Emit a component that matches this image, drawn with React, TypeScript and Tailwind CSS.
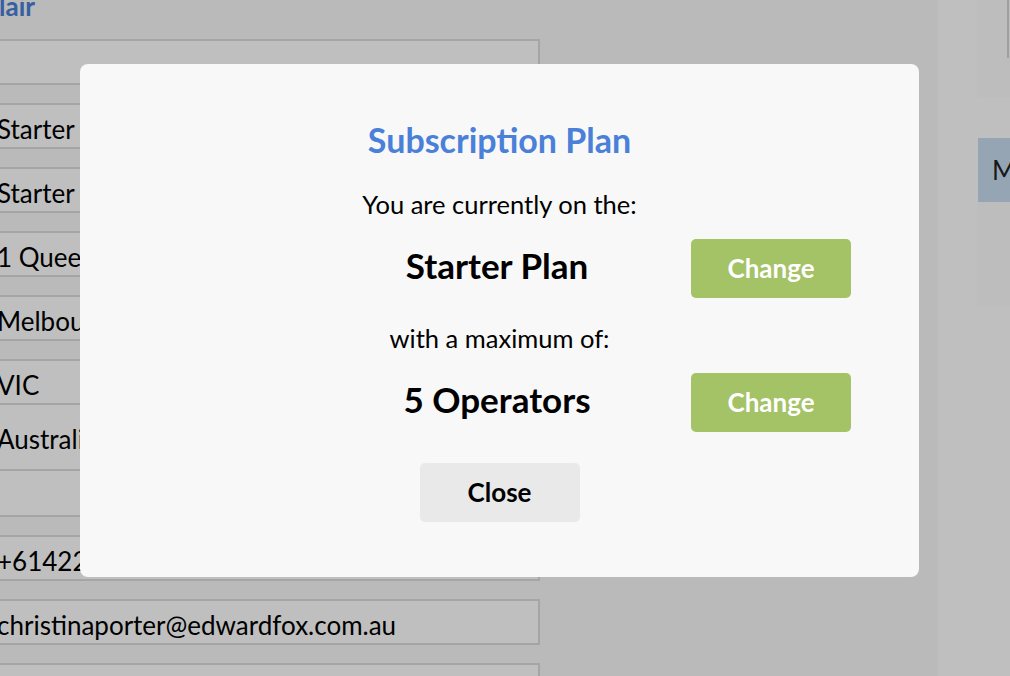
import React from 'react';

const fields = ['', 'Starter Plan', 'Starter Plan', '1 Queen Street', 'Melbourne', 'VIC'];

const PlanRow: React.FC<{ label: string }> = ({ label }) => (
  <div className="flex items-center justify-center">
    <div className="w-[239px]" />
    <div className="w-[220px] mb-[6px] text-center text-[35px] font-bold text-black leading-none whitespace-nowrap">{label}</div>
    <div className="w-[244px] pl-[84px]">
      <button className="w-[160px] h-[59px] rounded-[5px] bg-[#a4c266] text-white text-[26px] font-bold">
        Change
      </button>
    </div>
  </div>
);

const App: React.FC = () => {
  return (
    <div className="relative w-[1010px] h-[676px] overflow-hidden bg-[#f8f8f8]" style={{ fontFamily: 'Lato, "Open Sans", sans-serif' }}>
      {/* Page behind the dialog */}
      <div className="flex h-full">
        <div className="w-[552px] -ml-[12px] flex flex-col">
          <div className="h-[40px] -mt-[13px] -ml-[200px] w-[247px] text-right text-[26px] font-bold text-[#4a80d8] whitespace-nowrap">
            Christina Sinclair
          </div>
          <div className="flex flex-col gap-[18px] mt-[13px]">
            {fields.map((value, i) => (
              <div
                key={i}
                className={`h-[46px] bg-white border-2 border-[#dcdcdc] pl-[7px] pt-[6px] flex items-center text-[26px] text-black whitespace-nowrap ${i === 5 ? '-mb-[18px]' : ''}`}
              >
                {value}
              </div>
            ))}
            <div className="h-[66px] bg-white border-2 border-t-0 border-[#dcdcdc] pl-[7px] pt-[4px] flex items-center text-[26px] text-black">
              Australia
            </div>
            <div className="h-[46px] -mt-[18px] bg-white border-2 border-t-0 border-[#dcdcdc]" />
            <div className="h-[46px] bg-white border-2 border-[#dcdcdc] pl-[7px] pt-[6px] flex items-center text-[26px] text-black whitespace-nowrap">
              +61422 555 010
            </div>
            <div className="h-[46px] bg-white border-2 border-[#dcdcdc] pl-[7px] pt-[6px] flex items-center text-[26px] text-black whitespace-nowrap">
              christinaporter@edwardfox.com.au
            </div>
            <div className="h-[46px] bg-white border-2 border-[#dcdcdc]" />
          </div>
        </div>
        <div className="flex-1" />
        <div className="w-[72px] bg-white flex flex-col">
          <div className="ml-[40px] h-[97px] bg-[#fcfcfc] relative">
            <div className="absolute right-[1px] top-0 w-[2px] h-[58px] bg-[#d6d6d6]" />
          </div>
          <div className="ml-[40px] mt-[41px] h-[64px] bg-[#c9ddf0] flex items-center pl-[14px] text-[26px] text-[#222] overflow-hidden">
            My
          </div>
          <div className="ml-[40px] h-[104px] bg-[#fcfcfc]" />
        </div>
      </div>

      {/* Overlay */}
      <div className="absolute inset-0 bg-black/25" />

      {/* Dialog */}
      <div className="absolute left-[80px] top-[64px] w-[839px] h-[513px] rounded-[8px] bg-[#f8f8f8] flex flex-col items-center pt-[56px]">
        <h2 className="text-[34px] font-bold text-[#4a80d8] leading-[40px]">Subscription Plan</h2>
        <p className="mt-[30px] text-[25.5px] text-black leading-[28px]">You are currently on the:</p>
        <div className="mt-[21px]">
          <PlanRow label="Starter Plan" />
        </div>
        <p className="mt-[26px] text-[25.5px] text-black leading-[28px]">with a maximum of:</p>
        <div className="mt-[21px]">
          <PlanRow label="5 Operators" />
        </div>
        <button className="mt-[31px] w-[160px] h-[59px] rounded-[5px] bg-[#e9e9e9] text-[26px] font-bold text-black">
          Close
        </button>
      </div>
    </div>
  );
};

export default App;
